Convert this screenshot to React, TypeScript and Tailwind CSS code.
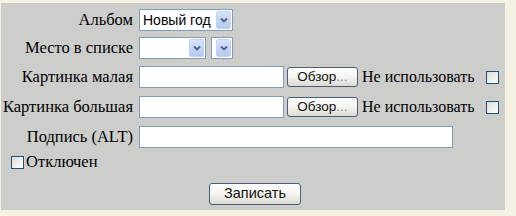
import React from 'react';

const serif = { fontFamily: '"Liberation Serif", "Times New Roman", serif' };
const sans = { fontFamily: '"Liberation Sans", Arial, sans-serif' };

const Arrow = () => (
  <span className="absolute right-[1px] top-[1px] bottom-[1px] w-[15px] rounded-[2px] bg-gradient-to-b from-[#d6e2fb] to-[#b4c9f3] border border-[#c3d3f5] flex items-center justify-center">
    <svg width="8" height="6" viewBox="0 0 8 6">
      <path d="M1 1.5 L4 4.5 L7 1.5" fill="none" stroke="#4d6185" strokeWidth="1.8" />
    </svg>
  </span>
);

const Select = ({ w, value }: { w: string; value?: string }) => (
  <div className={`relative h-[22px] ${w} bg-white border border-[#7f9db9] text-[14px] text-black leading-[20px] pl-[3px]`} style={sans}>
    {value}
    <Arrow />
  </div>
);

const Input = ({ w }: { w: string }) => (
  <div className={`h-[22px] ${w} bg-white border border-[#7f9db9]`} />
);

const Button = ({ label, w, h, size }: { label: React.ReactNode; w: string; h: string; size: string }) => (
  <div
    className={`${w} ${h} ${size} rounded-[3px] border border-[#4a5d7d] bg-gradient-to-b from-[#ffffff] via-[#f4f4f0] to-[#dcdad2] flex items-center justify-center text-[#111]`}
    style={sans}
  >
    {label}
  </div>
);

const Check = () => (
  <div className="w-[13px] h-[13px] border border-[#1c5180] bg-gradient-to-br from-[#dcdcd6] to-[#ffffff]" />
);

const Label = ({ children }: { children: React.ReactNode }) => (
  <div className="w-[133px] shrink-0 text-right pr-[1px] text-[16.5px] text-black leading-none" style={serif}>
    {children}
  </div>
);

export default function App() {
  return (
    <div className="w-[516px] h-[216px] bg-[#f5f2e4] pt-[3px] pl-[1px]">
      <div className="w-[504px] h-[207px] bg-[#cdcdcc] pt-[5px] flex flex-col">
        {/* Альбом */}
        <div className="h-[24px] flex items-center">
          <Label>Альбом</Label>
          <div className="ml-[5px]">
            <Select w="w-[94px]" value="Новый год" />
          </div>
        </div>

        {/* Место в списке */}
        <div className="h-[24px] mt-[4px] flex items-center">
          <Label>Место в списке</Label>
          <div className="ml-[5px] flex gap-[5px]">
            <Select w="w-[67px]" />
            <Select w="w-[22px]" />
          </div>
        </div>

        {/* Картинка малая */}
        <div className="h-[24px] mt-[5px] flex items-center">
          <Label>Картинка малая</Label>
          <div className="ml-[5px] flex items-center">
            <Input w="w-[145px]" />
            <div className="ml-[3px]">
              <Button w="w-[71px]" h="h-[20px]" size="text-[13.5px]" label={<>Обзор<span className="text-[#8a8a8a]">...</span></>} />
            </div>
            <span className="ml-[4px] text-[16px] text-black" style={serif}>Не использовать</span>
            <div className="ml-[11px]"><Check /></div>
          </div>
        </div>

        {/* Картинка большая */}
        <div className="h-[24px] mt-[6px] flex items-center">
          <Label>Картинка большая</Label>
          <div className="ml-[5px] flex items-center">
            <Input w="w-[145px]" />
            <div className="ml-[3px]">
              <Button w="w-[71px]" h="h-[20px]" size="text-[13.5px]" label={<>Обзор<span className="text-[#8a8a8a]">...</span></>} />
            </div>
            <span className="ml-[4px] text-[16px] text-black" style={serif}>Не использовать</span>
            <div className="ml-[11px]"><Check /></div>
          </div>
        </div>

        {/* Подпись */}
        <div className="h-[24px] mt-[6px] flex items-center">
          <Label>Подпись (ALT)</Label>
          <div className="ml-[5px]">
            <Input w="w-[314px]" />
          </div>
        </div>

        {/* Отключен */}
        <div className="h-[24px] mt-[1px] flex items-center pl-[10px]">
          <Check />
          <span className="ml-[2px] text-[16.5px] text-black" style={serif}>Отключен</span>
        </div>

        {/* Записать */}
        <div className="h-[24px] mt-[8px] flex items-center pl-[208px]">
          <Button w="w-[92px]" h="h-[22px]" size="text-[14.5px]" label="Записать" />
        </div>
      </div>
    </div>
  );
}
